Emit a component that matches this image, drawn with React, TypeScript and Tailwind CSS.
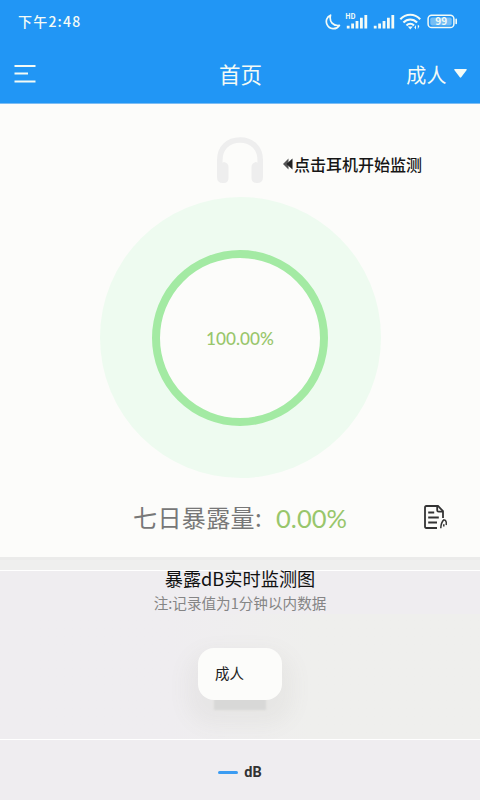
function StatusBar() {
  return (
    <div className="flex h-11 items-center justify-between pr-[21px] pl-[18px]">
      <span className="-mt-[2px] text-[14px] leading-5 font-medium tracking-[1.2px]">下午2:48</span>
      <svg width="134" height="20" viewBox="0 0 134 20" fill="none">
        {/* moon */}
        <path
          d="M5.5 3.2 C1.6 4.8 0.4 9.1 2.1 12.6 C4.3 17.3 11 18.3 14.4 13.4 C8.2 14.2 4 9.8 5.5 3.2 Z"
          stroke="currentColor"
          strokeWidth="1.7"
          strokeLinejoin="round"
        />
        <text x="20.2" y="7.2" fontSize="7" fontWeight="700" fill="currentColor">
          HD
        </text>
        <path
          d="M23.2 16.4v-2.7M27.6 16.4v-5M32 16.4V8.9M36.4 16.4V5.7M40.8 16.4V2.9"
          stroke="currentColor"
          strokeWidth="2.8"
        />
        <path
          d="M50.2 16.4v-2.7M54.6 16.4v-5M59 16.4V8.9M63.4 16.4V5.7M67.8 16.4V2.9"
          stroke="currentColor"
          strokeWidth="2.8"
        />
        {/* wifi */}
        <path
          d="M75.3 7.2C81 1.2 89.5 1.2 95.2 7.2M78.4 10.5C82.3 6.4 88.2 6.4 92.1 10.5M81.5 13.4C83.7 11.2 86.8 11.2 89 13.4"
          stroke="currentColor"
          strokeWidth="2.1"
        />
        <path d="M82.8 14.6h5L85.3 17.4zM89.3 15.4l1.7-2.4v4.4M94.4 14l-1.6 3.2v-4.4" fill="currentColor" />
        {/* battery */}
        <rect x="103.1" y="3.2" width="25.8" height="12.4" rx="3.6" stroke="currentColor" strokeWidth="1.5" />
        <rect x="105.3" y="5.4" width="21.4" height="8" rx="1.8" fill="currentColor" fillOpacity="0.4" />
        <path d="M131.2 7.4v4" stroke="currentColor" strokeWidth="1.6" strokeLinecap="round" />
        <text x="116.2" y="13.2" fontSize="10" fontWeight="700" textAnchor="middle" fill="currentColor">
          99
        </text>
      </svg>
    </div>
  )
}

function NavBar() {
  return (
    <div className="grid h-[60px] grid-cols-3 items-center pr-[13px] pl-[14px]">
      <svg width="22" height="20" viewBox="0 0 22 20" stroke="currentColor" strokeWidth="2.2">
        <path d="M0.5 2h21M0.5 9.5h13.5M0.5 17.5h21" />
      </svg>
      <h1 className="-mt-px text-center text-[21.5px] leading-8">首页</h1>
      <div className="flex items-center justify-end gap-[7px]">
        <span className="pt-px text-[20px] leading-8 tracking-[0.4px]">成人</span>
        <svg width="13" height="9" viewBox="0 0 13 9" className="-mt-px">
          <path d="M0.8 0h11.4q1 0.4 0.3 1.3L7.2 8.3q-0.7 0.8-1.4 0L0.5 1.3Q-0.2 0.4 0.8 0z" fill="currentColor" />
        </svg>
      </div>
    </div>
  )
}

function Headphones() {
  return (
    <svg width="46" height="46" viewBox="0 0 46 46" fill="none">
      <path d="M2.8 35V23C2.8 11 11 3 23 3s20.2 8 20.2 20v12" stroke="#eeeeee" strokeWidth="5.6" />
      <path
        d="M0 28l7-3q4.5 1 4.5 5v11q0 5-5 5H6q-6 0-6-6zM46 28l-7-3q-4.5 1-4.5 5v11q0 5 5 5h.5q6 0 6-6z"
        fill="#eeeeee"
      />
    </svg>
  )
}

function RecordIcon() {
  return (
    <svg width="25" height="25" viewBox="0 0 25 25" fill="none" stroke="#333333" strokeWidth="1.8">
      <path d="M14 23H3.4Q2 23 2 21.4V2.6Q2 1 3.4 1H15L20 6.200V13" />
      <path d="M14.2 1v4.2q0 1.4 1.4 1.4H20" />
      <path d="M5.2 7.5h6M5.2 12.5h10.6M5.2 17.5h8.8" />
      <path
        d="M17.8 23.2c0-3.6 0.6-6 3.2-8.6M20 15.6c1.6-1.8 4 0.1 3.2 4.4M20.8 19.2v2.4"
        strokeWidth="1.5"
      />
    </svg>
  )
}

export default function App() {
  return (
    <div className="flex h-[800px] w-[480px] flex-col overflow-hidden bg-[#fcfcfa] font-['Noto_Sans_CJK_SC',sans-serif]">
      <header className="h-[104px] border-b border-[#7dbdf3] bg-[#2196f5] text-[#f4fbf6]">
        <StatusBar />
        <NavBar />
      </header>

      <main className="flex h-[453px] flex-col items-center">
        <div className="flex h-[93px] w-full items-start pt-[33px] pl-[217px]">
          <Headphones />
          <div className="mt-[15px] ml-5 flex items-center text-[16px] leading-6 font-medium text-[#161616]">
            <svg width="10" height="12" viewBox="0 0 10 12" className="mr-px">
              <path d="M5.5 0.5 0 6l5.5 5.5z" fill="#555555" />
              <path d="M9.5 0.5 3.5 6l6 5.5z" fill="#222222" />
            </svg>
            <span>点击耳机开始监测</span>
          </div>
        </div>

        {/* exposure gauge */}
        <div className="flex size-[281px] shrink-0 items-center justify-center rounded-full bg-[#eefbf0]">
          <div className="flex size-[176px] items-center justify-center rounded-full border-[8.5px] border-[#a3eaa3] bg-[#fcfcfa]">
            <span className="pt-[2px] font-[Lato,sans-serif] text-[17.2px] font-medium text-[#98c66b]">100.00%</span>
          </div>
        </div>

        <div className="flex h-[79px] w-full items-center pr-8 pl-[133px]">
          <span className="-mt-px text-[24px] leading-8 tracking-[0.4px] text-[#777777]">七日暴露量:</span>
          <span className="ml-[14px] font-[Lato,sans-serif] text-[25.5px] leading-8 text-[#98c66b]">0.00%</span>
          <div className="ml-auto">
            <RecordIcon />
          </div>
        </div>
      </main>

      <section className="flex flex-1 flex-col items-center bg-[#efedf0]">
        <div className="h-[14px] w-full border-t-[3px] border-b border-t-[#ebebea] border-b-white bg-[#efefee]" />
        <h2 className="-mt-[6px] text-[18.2px] leading-[26px] text-[#111111]">暴露dB实时监测图</h2>
        <p className="mt-px text-[14.6px] leading-[22px] text-[#858585]">注:记录值为1分钟以内数据</p>

        <div className="flex h-[126px] w-full justify-center border-b border-white bg-linear-to-r from-[#efedf0] from-35% to-[#efefed] to-65% pt-[34px]">
          <div className="flex h-[52px] w-[84px] items-center rounded-[16px] bg-[#fcfcfa] pb-[2px] pl-[17px] text-[14.5px] text-[#222222] shadow-[0_26px_2px_-16px_#d8d8d7,0_14px_20px_12px_rgba(120,120,110,0.06)] [clip-path:inset(-30px_-50px_-39px_-50px)]">
            成人
          </div>
        </div>

        <div className="flex flex-1 items-center gap-[6px] pt-[5px]">
          <div className="h-[3px] w-5 rounded-full bg-[#3b9cf2]" />
          <span className="font-[Roboto,sans-serif] text-[14.5px] leading-5 font-bold text-[#333333]">dB</span>
        </div>
      </section>
    </div>
  )
}
